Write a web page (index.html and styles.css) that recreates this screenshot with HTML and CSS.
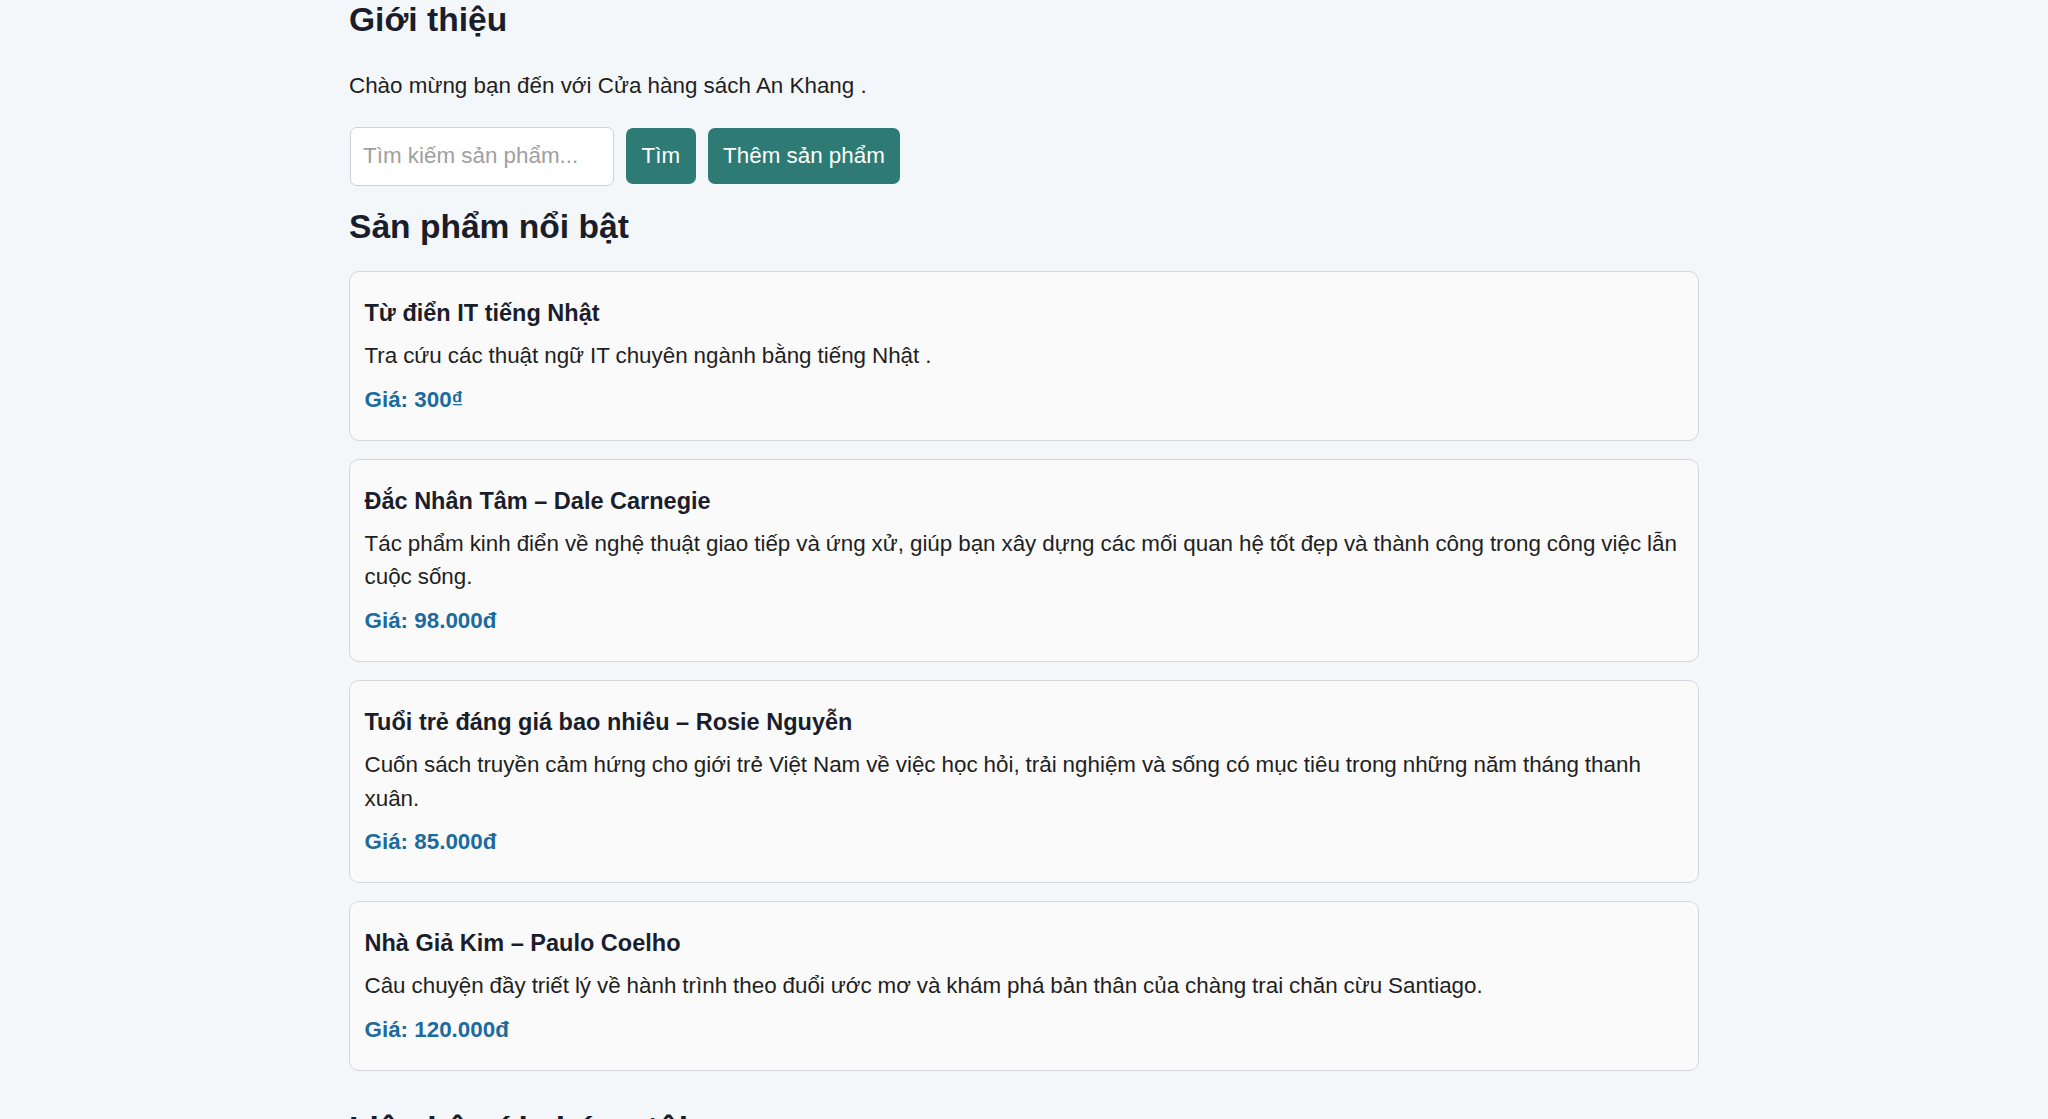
FILE: index.html
```html
<!DOCTYPE html>
<html lang="vi">
<head>
<meta charset="utf-8">
<title>Cửa hàng sách An Khang</title>
<link rel="stylesheet" href="styles.css">
</head>
<body>
<main class="container">
  <section class="intro">
    <h2 class="section-title first">Giới thiệu</h2>
    <p class="welcome">Chào mừng bạn đến với Cửa hàng sách An Khang .</p>
    <div class="search-row">
      <input class="search-input" type="text" placeholder="Tìm kiếm sản phẩm...">
      <button class="btn">Tìm</button>
      <button class="btn">Thêm sản phẩm</button>
    </div>
  </section>

  <section class="products">
    <h2 class="section-title">Sản phẩm nổi bật</h2>
    <div class="card">
      <h3 class="card-title">Từ điển IT tiếng Nhật</h3>
      <p class="card-desc">Tra cứu các thuật ngữ IT chuyên ngành bằng tiếng Nhật .</p>
      <p class="card-price">Giá: 300₫</p>
    </div>
    <div class="card">
      <h3 class="card-title">Đắc Nhân Tâm – Dale Carnegie</h3>
      <p class="card-desc">Tác phẩm kinh điển về nghệ thuật giao tiếp và ứng xử, giúp bạn xây dựng các mối quan hệ tốt đẹp và thành công trong công việc lẫn cuộc sống.</p>
      <p class="card-price">Giá: 98.000đ</p>
    </div>
    <div class="card">
      <h3 class="card-title">Tuổi trẻ đáng giá bao nhiêu – Rosie Nguyễn</h3>
      <p class="card-desc">Cuốn sách truyền cảm hứng cho giới trẻ Việt Nam về việc học hỏi, trải nghiệm và sống có mục tiêu trong những năm tháng thanh xuân.</p>
      <p class="card-price">Giá: 85.000đ</p>
    </div>
    <div class="card">
      <h3 class="card-title">Nhà Giả Kim – Paulo Coelho</h3>
      <p class="card-desc">Câu chuyện đầy triết lý về hành trình theo đuổi ước mơ và khám phá bản thân của chàng trai chăn cừu Santiago.</p>
      <p class="card-price">Giá: 120.000đ</p>
    </div>
  </section>

  <section class="contact">
    <h2 class="section-title last">Liên hệ với chúng tôi</h2>
  </section>
</main>
</body>
</html>
```

FILE: styles.css
```css
html, body {
  margin: 0;
  padding: 0;
}

body {
  background: #f4f7fa;
  font-family: "Liberation Sans", Arial, Helvetica, sans-serif;
  font-size: 22.4px;
  line-height: 1.5;
  color: #1f1f1f;
}

.container {
  width: 1350px;
  margin: 0 auto;
}

.section-title {
  font-size: 33.6px;
  line-height: 1.2;
  font-weight: 700;
  color: #1a1e2c;
  margin: 21px 0 24px;
}

.section-title.first {
  margin: 0 0 29px;
}

.section-title.last {
  margin-top: 38px;
}

.welcome {
  margin: 0 0 24px;
}

.search-row {
  display: flex;
  align-items: center;
  gap: 12px;
  height: 59px;
}

.search-input {
  box-sizing: border-box;
  width: 264px;
  height: 59px;
  margin-left: 1px;
  padding: 0 12px;
  border: 1px solid #ccd1d7;
  border-radius: 7px;
  background: #ffffff;
  font-family: inherit;
  font-size: 22.4px;
  color: #222;
  outline: none;
}

.search-input::placeholder {
  color: #a0a0a0;
}

.btn {
  box-sizing: border-box;
  height: 56px;
  padding: 0 15.5px;
  border: none;
  border-radius: 7px;
  background: #2e7a74;
  color: #ffffff;
  font-family: inherit;
  font-size: 22.4px;
  cursor: pointer;
}

.card {
  background: #fafafa;
  border: 1px solid #d3d6da;
  border-radius: 10px;
  padding: 16.8px 12px 16.8px 14.5px;
  margin-bottom: 18px;
}

.card-title {
  font-size: 23.5px;
  line-height: 1.5;
  font-weight: 700;
  color: #1a1e2c;
  margin: 7px 0 0;
}

.card-desc {
  margin: 8px 0 0;
  word-spacing: -0.3px;
}

.card-price {
  margin: 10px 0 6.5px;
  font-weight: 700;
  color: #1b6b9e;
}
```
